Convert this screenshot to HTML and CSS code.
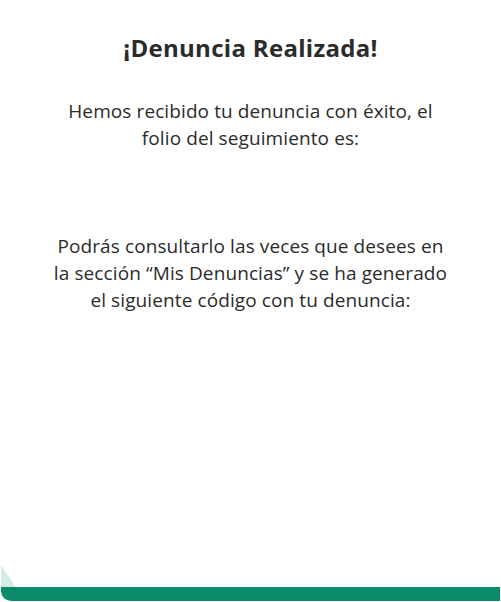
FILE: index.html
```html
<!DOCTYPE html>
<html lang="es">
<head>
<meta charset="utf-8">
<link rel="stylesheet" href="styles.css">
</head>
<body>
<main class="card">
  <h1 class="title">¡Denuncia Realizada!</h1>
  <p class="text">Hemos recibido tu denuncia con éxito, el<br>folio del seguimiento es:</p>
  <div class="folio"></div>
  <p class="text">Podrás consultarlo las veces que desees en<br>la sección “Mis Denuncias” y se ha generado<br>el siguiente código con tu denuncia:</p>
  <div class="spacer"></div>
  <div class="footer">
    <div class="footer-shadow"></div>
    <div class="footer-bar"></div>
  </div>
</main>
</body>
</html>
```
FILE: styles.css
```css
html, body {
  margin: 0;
  padding: 0;
  background: #ffffff;
}
.card {
  width: 501px;
  height: 602px;
  display: flex;
  flex-direction: column;
  align-items: center;
  font-family: "Open Sans", "Liberation Sans", sans-serif;
  color: #2b2b2b;
}
.title {
  margin: 33px 0 0;
  font-size: 24px;
  line-height: 30px;
  font-weight: 700;
  letter-spacing: 0.3px;
}
.text {
  margin: 0;
  font-size: 19px;
  line-height: 27px;
  text-align: center;
  letter-spacing: 0.1px;
  white-space: nowrap;
}
.title + .text { margin-top: 35px; }
.folio { height: 81px; }
.spacer { flex: 1; }
.footer {
  position: relative;
  align-self: stretch;
  height: 36px;
  margin: 0 1px 1px 1px;
}
.footer-shadow {
  position: absolute;
  left: 0;
  top: 0;
  width: 30px;
  height: 30px;
  background: #d4ece4;
  clip-path: polygon(0 0, 50% 75%, 0 75%);
}
.footer-bar {
  position: absolute;
  left: 0;
  right: 0;
  bottom: 0;
  height: 14px;
  background: #0a8c6c;
  border-bottom-left-radius: 10px;
}
```
